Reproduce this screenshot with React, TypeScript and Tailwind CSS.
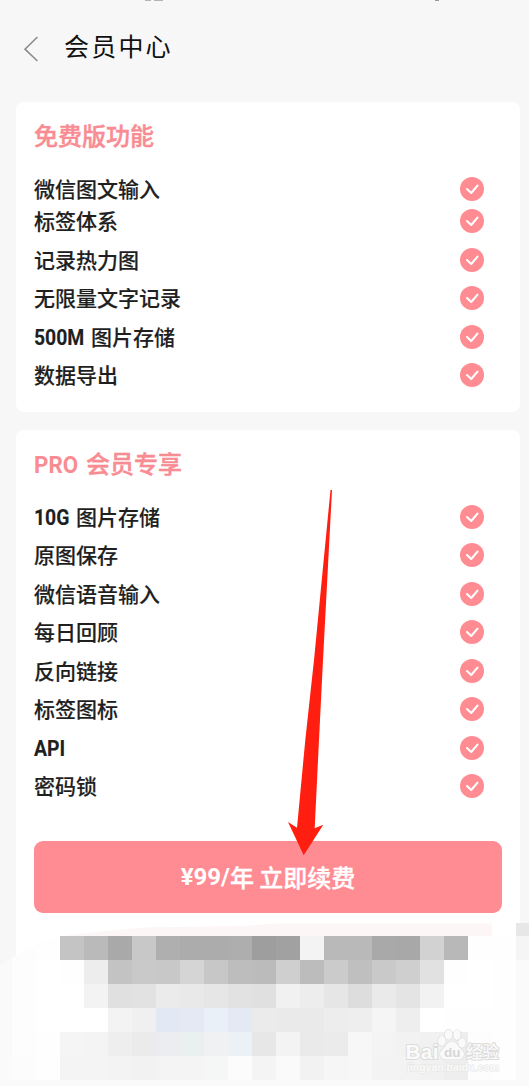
import type { ReactNode } from "react";

type Feature = { latin?: string; latinWidth?: string; label: string };

const FREE_FEATURES: Feature[] = [
  { label: "微信图文输入" },
  { label: "标签体系" },
  { label: "记录热力图" },
  { label: "无限量文字记录" },
  { latin: "500M", latinWidth: "w-[52px]", label: "图片存储" },
  { label: "数据导出" },
];

const PRO_FEATURES: Feature[] = [
  { latin: "10G", latinWidth: "w-[37px]", label: "图片存储" },
  { label: "原图保存" },
  { label: "微信语音输入" },
  { label: "每日回顾" },
  { label: "反向链接" },
  { label: "标签图标" },
  { latin: "API", latinWidth: "w-8", label: "" },
  { label: "密码锁" },
];

// 21 columns x 6 rows, 24px tiles
const MOSAIC = [
  "fdfdfd fefefe c4c4c4 bababa a9a9a9 c8c8c8 afafaf acacac acacac aeaeae 9e9e9e a1a1a1 f3f3f3 b9b9b9 b9b9b9 a9a9a9 a8a8a8 d2d2d2 b8b8b8 fefefe fefefe",
  "fdfdfd ffffff fefefe ededed c3c3c3 c9c9c9 c8c8c8 d5d5d5 c7c7c7 bdbdbd bbbbbb cfcfcf bcbcbc cbcbcb bfbfbf c9c9c9 cfcfcf e1e1e1 fefefe ffffff fefefe",
  "fdfdfd ffffff ffffff f3f3f3 e0e0e0 e2e2e2 ebebeb e9e9e9 e6e6e6 e2e2e2 e0e0e0 f1f1f1 ededed e6e6e6 dddddd eaeaea e4e4e4 f2f2f2 ffffff ffffff fefefe",
  "fdfdfd ffffff ffffff ffffff f3f3f3 f0f0f0 e2e8f4 e4e9f4 eaf0f8 e4e9f3 ebebeb eaeaea eaeaea ededed eeeeee f5f5f5 eeeeee ffffff fefefe fefefe fefefe",
  "fdfdfd fefefe f5f5f5 f4f4f4 eeeeee ebebeb ebedf1 eaefef eff1f3 ecf1f5 e7e7e7 f3f3f3 eaeaea ebebeb f7f7f7 f4f4f4 f2f2f2 f1f1f1 eeeeee fdfdfd fefefe",
  "fcfcfc fefefe f4f4f4 f4f4f4 f3f3f3 f2f2f2 f4f4f4 f4f4f4 f4f7f6 fcfcfc f4f4f4 fafafa f2f2f2 f6f6f6 f7f7f7 f3f3f3 f3f3f3 f1f1f1 eeeeee fdfdfd fefefe",
].map((row) => row.split(" "));

function CheckBadge() {
  return (
    <svg className="size-6 shrink-0" viewBox="0 0 24 24" fill="none">
      <circle cx="12" cy="12" r="12" fill="#ff8c92" />
      <path
        d="M7 12 L11.2 16 L17.5 8.6"
        stroke="#fff"
        strokeWidth="2.1"
        strokeLinecap="round"
        strokeLinejoin="round"
      />
    </svg>
  );
}

function FeatureRow({ latin, latinWidth, label }: Feature) {
  return (
    <li className="flex h-[38.5px] items-center justify-between">
      <span className="flex h-[30px] -translate-y-[1.5px] gap-[5px] text-[21px] leading-[30px] font-medium whitespace-nowrap text-[#1f1f1f] [-webkit-text-stroke:0.15px]">
        {latin && (
          <span className={latinWidth}>
            <span className="inline-block origin-left scale-x-[0.88] font-['Roboto'] text-[22px] font-bold">
              {latin}
            </span>
          </span>
        )}
        {label}
      </span>
      <CheckBadge />
    </li>
  );
}

function FeatureCard({
  title,
  features,
  className,
  listClassName,
  children,
}: {
  title: ReactNode;
  features: Feature[];
  className: string;
  listClassName: string;
  children?: ReactNode;
}) {
  return (
    <section className={className}>
      <h2 className="mb-[16.25px] h-9 text-2xl leading-9 font-medium text-[#f98c92] [-webkit-text-stroke:0.45px]">
        {title}
      </h2>
      <ul className={listClassName}>
        {features.map((feature) => (
          <FeatureRow
            key={`${feature.latin ?? ""}${feature.label}`}
            {...feature}
          />
        ))}
      </ul>
      {children}
    </section>
  );
}

function Arrow() {
  return (
    <svg
      className="absolute top-[490px] left-[288px] h-[366px] w-12"
      viewBox="288 490 48 366"
    >
      <path
        d="M330.5 490 H332 L323 660 L319 740 L314.7 828.3 L323.3 824.7 L303.7 855.3 L288 822 L297 827.7 L305.3 740 L314 660 Z"
        fill="#ff1e10"
      />
    </svg>
  );
}

function Watermark() {
  return (
    <svg
      className="absolute top-[1024px] left-[402px] h-[52px] w-[106px]"
      viewBox="402 1024 106 52"
      fontFamily="'Liberation Sans', 'Noto Sans CJK SC', sans-serif"
      fontWeight="700"
      fill="#fafafa"
      stroke="#dcdcdc"
      strokeWidth="2"
      paintOrder="stroke"
      strokeLinejoin="round"
    >
      <text x="405.5" y="1058.5" fontSize="21" textLength="33">
        Bai
      </text>
      <g strokeWidth="1.2">
        <ellipse cx="442" cy="1041" rx="3.8" ry="5" />
        <ellipse cx="448.5" cy="1034.7" rx="3.7" ry="5" />
        <ellipse cx="457" cy="1035" rx="3.7" ry="5" />
        <ellipse cx="462" cy="1043" rx="3.8" ry="4.7" />
        <path d="M452 1041.5 C447 1041.5 446 1047 442.5 1049.5 C438 1053 440 1059.5 446 1059.5 H458 C464 1059.5 466 1053 461.5 1049.5 C458 1047 457 1041.5 452 1041.5 Z" />
      </g>
      <text x="444" y="1057" fontSize="13.5" stroke="none" fill="#d6d6d6">
        du
      </text>
      <text x="466" y="1057.5" fontSize="16.5" textLength="33" fontWeight="500">
        经验
      </text>
      <text
        x="407"
        y="1071"
        fontSize="10.5"
        textLength="92"
        strokeWidth="0.8"
        stroke="#e2e2e2"
      >
        jingyan.baidu.com
      </text>
    </svg>
  );
}

export default function App() {
  return (
    <div className="relative h-[1086px] w-[529px] overflow-hidden bg-[#f7f7f7] font-['Noto_Sans_CJK_SC',sans-serif]">
      <span className="absolute top-0 left-[145px] h-px w-[18px] bg-[linear-gradient(90deg,#b5b5b5_35%,#f7f7f7_35%_50%,#b5b5b5_50%)]" />
      <span className="absolute top-0 left-[435px] h-px w-1 bg-[#999999]" />

      <header className="flex h-[102px] items-start pt-7 pl-[23px]">
        <svg
          className="mt-[7px] h-[28px] w-4"
          viewBox="0 0 16 28"
          fill="none"
          stroke="#8d8d8d"
          strokeWidth="1.6"
        >
          <path d="M14.4 2 L2 14.2 L14.4 26" />
        </svg>
        <h1 className="ml-[25px] font-['KaiTi','STKaiti','Noto_Sans_CJK_SC',sans-serif] text-[25px] leading-[34px] font-normal tracking-[2.2px] text-[#111111]">
          会员中心
        </h1>
      </header>

      <main className="ml-4 flex w-[504px] flex-col gap-[18px]">
        <FeatureCard
          className="h-[310px] rounded-lg bg-white px-[18px] pt-[15px]"
          listClassName="pr-[18px] *:first:-mb-1.5"
          title="免费版功能"
          features={FREE_FEATURES}
        />
        <FeatureCard
          className="h-[526px] rounded-t-lg bg-white px-[18px] pt-[15px]"
          listClassName="mb-[35.75px] pr-[18px]"
          title={
            <span className="flex gap-[6px]">
              <span className="w-[46px]">
                <span className="inline-block origin-left scale-x-[0.93] font-['Roboto'] font-bold [-webkit-text-stroke:0]">
                  PRO
                </span>
              </span>
              会员专享
            </span>
          }
          features={PRO_FEATURES}
        >
          <button className="flex h-[72px] w-[468px] items-center justify-center rounded-[9px] bg-[#ff8c92] pb-px text-2xl font-medium whitespace-pre text-white [-webkit-text-stroke:0.35px]">
            <span className="font-['Roboto'] font-bold [-webkit-text-stroke:0]">
              ¥99/
            </span>
            年 立即续费
          </button>
        </FeatureCard>
      </main>

      <div className="absolute inset-x-0 top-[923px] h-[163px]">
        <svg className="h-full w-full" viewBox="0 923 529 163">
          <path
            d="M0 965 L12 958 L36 945 L60 936 H529 V1086 H0 Z"
            fill="#fafafa"
          />
          <path
            d="M60 936.5 Q100 931 145 927.5 L240 926 L276 923.5 H492 V937 Z"
            fill="#fdf6f6"
          />
          <path d="M516 923 H529 V936 H516 Z" fill="#e7e7e7" />
          <path d="M516 936 H529 V960 H516 Z" fill="#f5f5f5" />
        </svg>
      </div>
      <div className="absolute top-[936px] left-3 grid grid-cols-[repeat(21,24px)] [clip-path:polygon(0_22px,24px_9px,48px_0,100%_0,100%_100%,0_100%)]">
        {MOSAIC.map((row, y) =>
          row.map((color, x) => (
            <span
              key={`${y}-${x}`}
              className="size-6"
              style={{ backgroundColor: `#${color}` }}
            />
          )),
        )}
      </div>

      <Watermark />
      <Arrow />
    </div>
  );
}
